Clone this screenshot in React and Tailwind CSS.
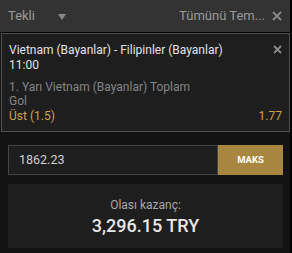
export default function App() {
  return (
    <div className="flex w-[292px] h-[253px] bg-black font-['Roboto',sans-serif]">
      <div className="flex flex-col w-[290px] h-full bg-[#131313]">
        {/* header */}
        <div className="flex items-center justify-between h-[32px] bg-[#333333] pl-[8px] pr-[8px] text-[13px] text-[#9a9a9a]">
          <div className="flex items-center">
            <span>Tekli</span>
            <svg className="ml-[23px] mt-[2px]" width="8" height="6" viewBox="0 0 8 6">
              <path d="M0 0 H8 L4 6 Z" fill="#8a8a8a" />
            </svg>
          </div>
          <div className="flex items-center">
            <span>Tümünü Tem...</span>
            <svg className="ml-[7px]" width="10" height="10" viewBox="0 0 10 10">
              <path d="M1 1 L9 9 M9 1 L1 9" stroke="#8a8a8a" strokeWidth="1.8" />
            </svg>
          </div>
        </div>
        <div className="h-[1px] bg-black" />
        {/* bet card */}
        <div className="ml-[1px] h-[99px] border border-[#505050] bg-[#1e1e1e] pl-[7px] pr-[7px] pt-[8px] text-[12px] leading-[16px]">
          <div className="flex justify-between">
            <span className="text-[#e2e2e2]">Vietnam (Bayanlar) - Filipinler (Bayanlar)</span>
            <svg className="mt-[3px]" width="9" height="9" viewBox="0 0 9 9">
              <path d="M1 1 L8 8 M8 1 L1 8" stroke="#8a8a8a" strokeWidth="1.8" />
            </svg>
          </div>
          <div className="text-[#e2e2e2] leading-[15px]">11:00</div>
          <div className="mt-[7px] text-[#858585] leading-[14px]">1. Yarı Vietnam (Bayanlar) Toplam</div>
          <div className="text-[#858585] leading-[14px]">Gol</div>
          <div className="flex justify-between text-[#d1a449] mt-[1px] leading-[15px]">
            <span>Üst (1.5)</span>
            <span>1.77</span>
          </div>
        </div>
        {/* stake */}
        <div className="flex mt-[13px] ml-[8px] mr-[7px] h-[30px]">
          <div className="flex items-center flex-1 border border-[#444444] bg-[#1e1e1e] pl-[10px] text-[12.5px] text-[#cfcfcf]">
            1862.23
          </div>
          <div className="flex items-center justify-center w-[65px] bg-[#a8863f] text-[9.5px] font-bold text-white">
            MAKS
          </div>
        </div>
        {/* result */}
        <div className="flex flex-col items-center mt-[9px] ml-[8px] mr-[7px] h-[64px] bg-[#1e1e1e] pt-[13px]">
          <div className="text-[12px] leading-[16px] text-[#a8a8a8]">Olası kazanç:</div>
          <div className="text-[18px] leading-[24px] font-medium text-[#e8e8e8] mt-[1px]">3,296.15 TRY</div>
        </div>
      </div>
    </div>
  );
}
